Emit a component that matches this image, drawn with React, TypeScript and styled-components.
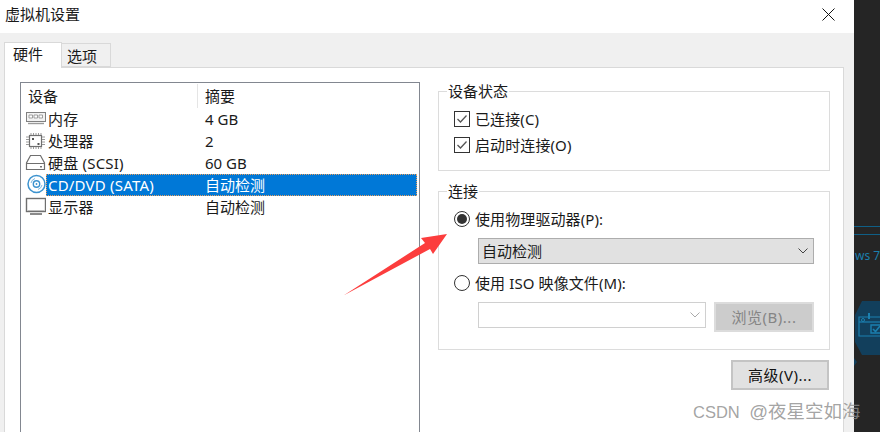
import styled, { createGlobalStyle } from "styled-components";

const GlobalStyle = createGlobalStyle`
  html, body {
    margin: 0;
    padding: 0;
    background: #252525;
  }
  body {
    width: 880px;
    height: 432px;
    overflow: hidden;
    font-family: "Noto Sans", "Noto Sans CJK SC", sans-serif;
    font-size: 15px;
    color: #1a1a1a;
  }
`;

const Screen = styled.div`
  position: relative;
  display: flex;
  width: 880px;
  height: 432px;
  overflow: hidden;
`;

const Dialog = styled.div`
  width: 854px;
  height: 432px;
  flex: none;
  display: flex;
  flex-direction: column;
  background: #f0f0f0;
`;

const TitleBar = styled.div`
  height: 33px;
  flex: none;
  background: #fff;
  display: flex;
  align-items: center;
  justify-content: space-between;
  padding: 0 19px 5px 5px;
  box-sizing: border-box;
  line-height: 20px;
`;

const TabStrip = styled.div`
  display: flex;
  align-items: flex-end;
  height: 34px;
  flex: none;
  padding-left: 4px;
`;

const Tab = styled.div<{ $active?: boolean }>`
  box-sizing: border-box;
  height: ${(p) => (p.$active ? 26 : 24)}px;
  width: ${(p) => (p.$active ? 58 : 50)}px;
  margin-bottom: ${(p) => (p.$active ? -1 : 0)}px;
  margin-left: ${(p) => (p.$active ? 0 : -1)}px;
  border: 1px solid #d9d9d9;
  border-bottom: ${(p) => (p.$active ? "none" : "1px solid #d9d9d9")};
  background: ${(p) => (p.$active ? "#fff" : "#f0f0f0")};
  position: relative;
  z-index: ${(p) => (p.$active ? 1 : 0)};
  padding: ${(p) => (p.$active ? "0 0 0 8px" : "1px 0 0 5px")};
  line-height: 23px;
`;

const TabPanel = styled.div`
  box-sizing: border-box;
  flex: 1;
  width: 840px;
  margin-left: 4px;
  border: 1px solid #d9d9d9;
  border-bottom: none;
  background: #fff;
  display: flex;
  gap: 18px;
  padding: 14px 12px 0 15px;
`;

const DeviceList = styled.div`
  box-sizing: border-box;
  width: 400px;
  height: 360px;
  flex: none;
  border: 1px solid #828790;
  border-bottom: none;
  padding: 1px 2px 0 2px;
`;

const ListHeader = styled.div`
  display: flex;
  height: 24px;
  line-height: 24px;
`;

const HeaderCell = styled.div<{ $w?: number }>`
  box-sizing: border-box;
  width: ${(p) => (p.$w ? `${p.$w}px` : "auto")};
  padding-left: ${(p) => (p.$w ? 5 : 7)}px;
  border-right: ${(p) => (p.$w ? "1px solid #e5e5e5" : "none")};
`;

const Row = styled.div`
  display: flex;
  align-items: center;
  height: 22px;
`;

const RowIcon = styled.svg`
  width: 21px;
  height: 22px;
  flex: none;
  margin-left: 2px;
`;

const RowBody = styled.div<{ $selected?: boolean }>`
  flex: 1;
  display: flex;
  height: 22px;
  line-height: 22px;
  box-sizing: border-box;
  background: ${(p) => (p.$selected ? "#0078d7" : "transparent")};
  color: ${(p) => (p.$selected ? "#fff" : "inherit")};
  outline: ${(p) => (p.$selected ? "1px dotted #e8a060" : "none")};
  outline-offset: -1px;
  padding-left: 2px;
`;

const RowName = styled.div`
  width: 157px;
  flex: none;
  letter-spacing: 0.2px;
`;

const SideColumn = styled.div`
  width: 392px;
  flex: none;
  display: flex;
  flex-direction: column;
  padding-top: 9px;
`;

const Group = styled.fieldset<{ $h: number }>`
  box-sizing: border-box;
  height: ${(p) => p.$h}px;
  margin: 0 0 20px;
  padding: 0;
  border: 1px solid #dcdcdc;
  position: relative;
`;

const GroupTitle = styled.div`
  position: absolute;
  left: 8px;
  top: -11px;
  padding: 0 1px;
  background: #fff;
  line-height: 20px;
`;

const GroupBody = styled.div`
  display: flex;
  flex-direction: column;
  padding: 14px 0 0 15px;
`;

const CheckRow = styled.div`
  display: flex;
  align-items: center;
  gap: 5px;
  height: 26px;
  line-height: 26px;
  letter-spacing: 0.1px;
`;

const CheckBox = styled.svg`
  width: 16px;
  height: 16px;
  flex: none;
`;

const RadioRow = styled.div<{ $gapTop?: number }>`
  display: flex;
  align-items: center;
  gap: 5px;
  height: 26px;
  line-height: 26px;
  letter-spacing: 0.1px;
  margin-top: ${(p) => p.$gapTop ?? 0}px;
  margin-bottom: 6px;
`;

const Radio = styled.div<{ $on?: boolean }>`
  box-sizing: border-box;
  width: 16px;
  height: 16px;
  flex: none;
  border-radius: 50%;
  border: 1px solid #333;
  display: flex;
  align-items: center;
  justify-content: center;
  &::after {
    content: "";
    display: ${(p) => (p.$on ? "block" : "none")};
    width: 10px;
    height: 10px;
    border-radius: 50%;
    background: #333;
  }
`;

const Select = styled.div<{ $w: number; $empty?: boolean }>`
  box-sizing: border-box;
  width: ${(p) => p.$w}px;
  height: 26px;
  margin-left: ${(p) => (p.$empty ? 0 : 24)}px;
  border: 1px solid ${(p) => (p.$empty ? "#d0d0d0" : "#adadad")};
  background: ${(p) => (p.$empty ? "#fff" : "#e1e1e1")};
  display: flex;
  align-items: center;
  justify-content: space-between;
  padding: 0 4px 0 3px;
  line-height: 24px;
`;

const Chevron = styled.svg`
  width: 12px;
  height: 8px;
  flex: none;
`;

const FileRow = styled.div`
  display: flex;
  align-items: flex-start;
  gap: 8px;
  margin-left: 24px;
`;

const Button = styled.div<{ $disabled?: boolean; $w: number }>`
  box-sizing: border-box;
  width: ${(p) => p.$w}px;
  height: 30px;
  border: 2px solid ${(p) => (p.$disabled ? "#dcdcdc" : "#c4c4c4")};
  background: ${(p) => (p.$disabled ? "#cccccc" : "#e1e1e1")};
  color: ${(p) => (p.$disabled ? "#858585" : "#111")};
  display: flex;
  align-items: center;
  justify-content: center;
  line-height: 24px;
  letter-spacing: 0.5px;
`;

const ButtonRow = styled.div`
  display: flex;
  justify-content: flex-end;
  margin: -10px 1px 0 0;
`;

const Backdrop = styled.div`
  flex: 1;
  background: #252525;
  position: relative;
  overflow: hidden;
`;

const BackdropLine = styled.div<{ $top: number }>`
  position: absolute;
  left: 0;
  right: 0;
  top: ${(p) => p.$top}px;
  height: 1px;
  background: #0f5f86;
`;

const BackdropText = styled.div`
  position: absolute;
  left: 1px;
  top: 248px;
  color: #1b7fae;
  font-size: 12px;
  line-height: 16px;
  white-space: nowrap;
`;

const BackdropBadge = styled.svg`
  position: absolute;
  left: 0;
  top: 298px;
  width: 26px;
  height: 70px;
`;

const Arrow = styled.svg`
  position: absolute;
  left: 340px;
  top: 230px;
  width: 112px;
  height: 70px;
`;

const Watermark = styled.div`
  position: absolute;
  left: 693px;
  top: 399px;
  color: rgba(140, 140, 140, 0.8);
  font-family: "Liberation Sans", "Noto Sans CJK SC", sans-serif;
  font-size: 16.5px;
  line-height: 26px;
  word-spacing: 5px;
  white-space: nowrap;
`;

const WatermarkName = styled.span`
  font-size: 18.5px;
`;

const CloseIcon = () => (
  <svg width="13" height="13" viewBox="0 0 13 13">
    <path d="M0.5 0.5 L12.5 12.5 M12.5 0.5 L0.5 12.5" stroke="#111" strokeWidth="1" fill="none" />
  </svg>
);

const MemoryIcon = () => (
  <RowIcon viewBox="0 0 21 22">
    <rect x="1.5" y="4.5" width="19" height="9" fill="#f2f2f2" stroke="#808080" />
    <path d="M4 7h3.500v3H4zM9 7h3.500v3H9zM14 7h3.500v3H14z" fill="#fff" stroke="#8a8a8a" strokeWidth="0.800" />
    <path d="M3 15.500h16" stroke="#9a9a9a" strokeWidth="1.400" />
  </RowIcon>
);

const CpuIcon = () => (
  <RowIcon viewBox="0 0 21 22">
    <rect x="4.500" y="5.500" width="12" height="11" fill="#fff" stroke="#6f6f6f" strokeWidth="1.200" />
    <path
      d="M6 3v2M8.500 3v2M11 3v2M13.500 3v2M16 3v2M6 17v2M8.500 17v2M11 17v2M13.500 17v2M16 17v2M1 7h3M1 9.500h3M1 12h3M1 14.500h3M17 7h3M17 9.500h3M17 12h3M17 14.500h3"
      stroke="#9a9a9a"
    />
    <path d="M7 8h2v2H7zM12.500 13h2v2h-2z" fill="#555" />
  </RowIcon>
);

const DiskIcon = () => (
  <RowIcon viewBox="0 0 21 22">
    <path d="M5.500 3.500h10L19.500 11v6.500h-18V11z" fill="#fff" stroke="#6f6f6f" strokeWidth="1.200" />
    <path d="M1.500 11.500h18" stroke="#6f6f6f" />
    <rect x="15" y="14" width="2" height="1.500" fill="#777" />
  </RowIcon>
);

const DiscIcon = () => (
  <RowIcon viewBox="0 0 21 22">
    <circle cx="11.500" cy="10" r="8.500" fill="#fff" stroke="#3d93cf" strokeWidth="1.500" />
    <circle cx="11.500" cy="10" r="3.200" fill="none" stroke="#3d93cf" strokeWidth="1.400" />
    <circle cx="11.500" cy="10" r="0.900" fill="#3d93cf" />
    <path d="M6 9a6 6 0 0 1 4-4.500M17 11a6 6 0 0 1-4 4.500" fill="none" stroke="#7fb8e0" />
  </RowIcon>
);

const MonitorIcon = () => (
  <RowIcon viewBox="0 0 21 22">
    <rect x="1.500" y="2.500" width="19" height="13" fill="#fff" stroke="#6f6f6f" strokeWidth="1.400" />
    <path d="M3 14.500h16" stroke="#bdbdbd" />
    <path d="M5 18h12" stroke="#8a8a8a" strokeWidth="2" />
  </RowIcon>
);

const CheckedBox = () => (
  <CheckBox viewBox="0 0 16 16">
    <rect x="0.500" y="0.500" width="15" height="15" fill="#fff" stroke="#333" />
    <path d="M3.500 8 L6.500 11 L12.500 4.500" fill="none" stroke="#555" strokeWidth="1.300" />
  </CheckBox>
);

const Caret = ({ color }: { color: string }) => (
  <Chevron viewBox="0 0 12 8">
    <path d="M1.500 1.500 L6 6 L10.500 1.500" fill="none" stroke={color} strokeWidth="1" />
  </Chevron>
);

const devices = [
  { icon: <MemoryIcon />, name: "内存", summary: "4 GB" },
  { icon: <CpuIcon />, name: "处理器", summary: "2" },
  { icon: <DiskIcon />, name: "硬盘 (SCSI)", summary: "60 GB" },
  { icon: <DiscIcon />, name: "CD/DVD (SATA)", summary: "自动检测", selected: true },
  { icon: <MonitorIcon />, name: "显示器", summary: "自动检测" },
];

const App = (): JSX.Element => {
  return (
    <Screen>
      <GlobalStyle />
      <Dialog>
        <TitleBar>
          <span>虚拟机设置</span>
          <CloseIcon />
        </TitleBar>
        <TabStrip>
          <Tab $active>硬件</Tab>
          <Tab>选项</Tab>
        </TabStrip>
        <TabPanel>
          <DeviceList>
            <ListHeader>
              <HeaderCell $w={175}>设备</HeaderCell>
              <HeaderCell>摘要</HeaderCell>
            </ListHeader>
            {devices.map((d) => (
              <Row key={d.name}>
                {d.icon}
                <RowBody $selected={d.selected}>
                  <RowName>{d.name}</RowName>
                  <div>{d.summary}</div>
                </RowBody>
              </Row>
            ))}
          </DeviceList>
          <SideColumn>
            <Group $h={80}>
              <GroupTitle>设备状态</GroupTitle>
              <GroupBody>
                <CheckRow>
                  <CheckedBox />
                  已连接(C)
                </CheckRow>
                <CheckRow>
                  <CheckedBox />
                  启动时连接(O)
                </CheckRow>
              </GroupBody>
            </Group>
            <Group $h={159}>
              <GroupTitle>连接</GroupTitle>
              <GroupBody>
                <RadioRow>
                  <Radio $on />
                  使用物理驱动器(P):
                </RadioRow>
                <Select $w={336}>
                  自动检测
                  <Caret color="#444" />
                </Select>
                <RadioRow $gapTop={6}>
                  <Radio />
                  使用 ISO 映像文件(M):
                </RadioRow>
                <FileRow>
                  <Select $w={228} $empty>
                    <span />
                    <Caret color="#aaa" />
                  </Select>
                  <Button $w={100} $disabled>
                    浏览(B)...
                  </Button>
                </FileRow>
              </GroupBody>
            </Group>
            <ButtonRow>
              <Button $w={98}>高级(V)...</Button>
            </ButtonRow>
          </SideColumn>
        </TabPanel>
      </Dialog>
      <Backdrop>
        <BackdropLine $top={226} />
        <BackdropLine $top={234} />
        <BackdropText>ws 7</BackdropText>
        <BackdropBadge viewBox="0 0 26 70">
          <path d="M8 3H26V57H8L1 44V17Z" fill="#123f5c" />
          <path d="M0 60L3 64L0 68Z" fill="#123f5c" />
          <path d="M26 19H5V38H26" fill="none" stroke="#1b80b0" strokeWidth="1.200" />
          <path d="M5 24h21" stroke="#1b80b0" strokeWidth="1.200" />
          <path d="M15 15v6" stroke="#1b80b0" strokeWidth="2" />
          <circle cx="9" cy="22" r="1.500" fill="none" stroke="#1b80b0" />
          <path d="M26 27H17V35H26" fill="none" stroke="#1b80b0" strokeWidth="1.400" />
          <path d="M19 31l2.500 2.500L26 28" fill="none" stroke="#1b80b0" strokeWidth="1.600" />
        </BackdropBadge>
      </Backdrop>
      <Arrow viewBox="0 0 112 70">
        <path d="M3.500 65.500 L85 13 L81 8 L107 4 L93 24 L90 19 Z" fill="#fc3d3d" />
      </Arrow>
      <Watermark>
        CSDN <WatermarkName>@夜星空如海</WatermarkName>
      </Watermark>
    </Screen>
  );
};

export default App;
